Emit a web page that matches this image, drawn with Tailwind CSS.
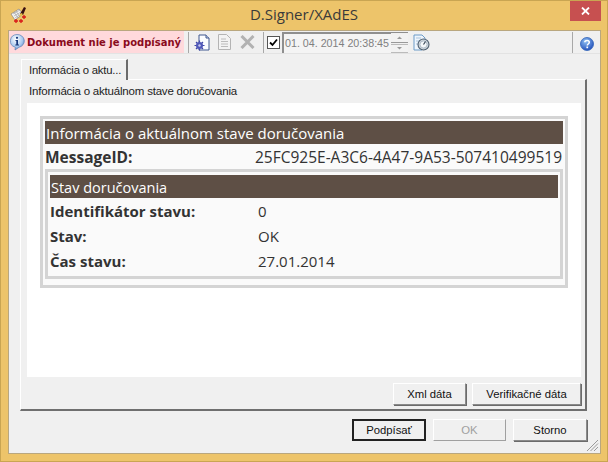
<!DOCTYPE html>
<html><head><meta charset="utf-8">
<script src="https://cdn.jsdelivr.net/npm/@tailwindcss/browser@4"></script>
</head>
<body class="m-0 overflow-hidden">
<div class="relative flex h-[462px] w-[608px] flex-col border border-[#c9a552] bg-[#edc46a] font-['Liberation_Sans',sans-serif] text-[11.300px] text-[#111]">
  <!-- title bar -->
  <div class="relative flex h-[29px] shrink-0 items-start">
    <svg class="ml-[9px] mt-[5px]" width="17" height="18" viewBox="0 0 17 18">
      <path d="M1 8l8-5 4 5-8 6z" fill="#f4f4f4" stroke="#777" stroke-width=".6"/>
      <path d="M3 8l7-4M4 10l7-4M5 12l6-4M4 6l4 6M6 5l4 6" stroke="#999" stroke-width=".6"/>
      <path d="M10 8l4-7 2 1-3 7z" fill="#3a1010"/><path d="M9 10l2-3 2 1-2 2z" fill="#e8c040"/>
      <path d="M4 15h4M6 13v4M9 15h4M11 13v4M12 11h4M14 9v4" stroke="#d81818" stroke-width="1.300"/>
    </svg>
    <div class="absolute left-0 right-0 top-[3px] text-center font-['Open_Sans',sans-serif] text-[15px] leading-[20px] text-[#3a3a3a]">D.Signer/XAdES</div>
    <div class="absolute right-[6px] top-0 flex h-[20px] w-[31px] items-center justify-center bg-[#c75050]">
      <svg width="9" height="8" viewBox="0 0 9 8"><path d="M1 .5l7 7M8 .5l-7 7" stroke="#fff" stroke-width="1.800"/></svg>
    </div>
  </div>
  <!-- client -->
  <div class="ml-[7px] mr-[6px] flex h-[424px] flex-col border border-[#b9a77f] bg-[#f0f0f0]">
    <!-- toolbar -->
    <div class="flex h-[23px] shrink-0 items-center border-b border-[#e3e3e3]">
      <div class="flex h-[22px] w-[175px] shrink-0 items-center bg-[#ffd9dc]">
        <svg class="shrink-0" width="16" height="18" viewBox="0 0 16 18">
          <defs><radialGradient id="i" cx=".4" cy=".3" r=".8"><stop offset="0" stop-color="#ffffff"/><stop offset=".6" stop-color="#a8c8ee"/><stop offset="1" stop-color="#3f6fb5"/></radialGradient></defs>
          <path d="M8 1.500a7 6.500 0 0 1 2 12.800L6 17l.3-2.800A7 6.500 0 0 1 8 1.500z" fill="url(#i)" stroke="#5a7fb5" stroke-width=".7"/>
          <circle cx="8" cy="4.800" r="1.100" fill="#16367a"/><path d="M6.500 7H9v4.500h1v1H6.300v-1h1V8h-.8z" fill="#16367a"/>
        </svg>
        <span class="ml-[2px] font-['DejaVu_Sans',sans-serif] text-[10px] font-bold whitespace-nowrap text-[#8a0b1c]">Dokument nie je podpísaný</span>
      </div>
      <div class="ml-[4px] h-[21px] w-px shrink-0 bg-[#a8a8a8]"></div>
      <svg class="ml-[5px] shrink-0" width="16" height="17" viewBox="0 0 16 17">
        <path d="M5 1h7l3 3v12H5z" fill="#fbfdff" stroke="#40588f"/><path d="M12 1v3h3" fill="#c8d4ea" stroke="#40588f"/>
        <path d="M5.500 6.500v10M.5 11.500h10M2 8l7 7M9 8l-7 7" stroke="#4048a8" stroke-width="1.200"/><circle cx="5.500" cy="11.500" r="3.500" fill="#5058b8"/><circle cx="5.500" cy="11.500" r="1.200" fill="#c8ccf0"/>
      </svg>
      <svg class="ml-[8px] shrink-0" width="13" height="16" viewBox="0 0 13 16">
        <path d="M.5.500h8l4 4v11H.5z" fill="#f3f3f3" stroke="#b4b4b4"/><path d="M3 5h5M3 7.500h7M3 10h7M3 12.500h7" stroke="#bcbcbc"/>
      </svg>
      <svg class="ml-[9px] shrink-0" width="15" height="14" viewBox="0 0 15 14"><path d="M1.500 1l12 12M13.500 1l-12 12" stroke="#b2b2b2" stroke-width="3"/></svg>
      <div class="ml-[8px] h-[21px] w-px shrink-0 bg-[#a8a8a8]"></div>
      <div class="ml-[3px] flex h-[13px] w-[13px] shrink-0 items-center justify-center border border-[#555] bg-white">
        <svg width="9" height="9" viewBox="0 0 9 9"><path d="M1 4.500l2.500 2.500L8 1.500" fill="none" stroke="#000" stroke-width="1.800"/></svg>
      </div>
      <div class="ml-[2px] flex h-[21px] w-[109px] shrink-0 items-center border-t-2 border-l-2 border-[#8f8f8f] bg-[#f4f4f4] pl-[1px]">
        <span class="text-[10.700px] whitespace-nowrap text-[#808080]">01. 04. 2014 20:38:45</span>
      </div>
      <div class="flex h-[21px] w-[17px] shrink-0 flex-col justify-between border-t border-[#8f8f8f] pt-[1px]">
        <div class="flex h-[9px] items-center justify-center border-b border-[#999] bg-[#f2f2f2]"><svg width="5" height="3" viewBox="0 0 5 3"><path d="M0 3l2.500-2.500L5 3z" fill="#999"/></svg></div>
        <div class="flex h-[9px] items-center justify-center border-t border-b border-[#bbb] bg-[#f2f2f2]"><svg width="5" height="3" viewBox="0 0 5 3"><path d="M0 0l2.500 2.500L5 0z" fill="#999"/></svg></div>
      </div>
      <svg class="ml-[5px] shrink-0" width="17" height="17" viewBox="0 0 17 17">
        <path d="M1 1h8l3 3v3a5 5 0 0 0-3 9H1z" fill="#eef5fc" stroke="#6d9cc8"/><path d="M3 4h5M3 7h5M3 10h4" stroke="#a9c3dc"/>
        <circle cx="10.500" cy="10.500" r="5.500" fill="#cfd6dc" stroke="#4e5f70" stroke-width="1.100"/><circle cx="10.500" cy="10.500" r="3.500" fill="#f5f8fa" stroke="#8da0b0" stroke-width=".6"/><path d="M10.500 10.500l2-3" stroke="#2a3a4a" stroke-width="1.100"/>
      </svg>
      <div class="ml-auto mr-[27px] h-[21px] w-px shrink-0 bg-[#a8a8a8]"></div>
      <svg class="absolute right-[13px] top-[36px]" width="14" height="14" viewBox="0 0 14 14">
        <defs><radialGradient id="h" cx=".4" cy=".3" r=".8"><stop offset="0" stop-color="#8fc0f4"/><stop offset="1" stop-color="#1844b4"/></radialGradient></defs>
        <circle cx="7" cy="7" r="6.500" fill="url(#h)" stroke="#2f62b8" stroke-width=".8"/>
        <path d="M4.800 5.300C4.800 3.900 6 3.400 7.100 3.400c1.300 0 2.200.8 2.200 1.900 0 1.700-2 1.700-2 3.200" fill="none" stroke="#fff" stroke-width="1.500"/><rect x="6.400" y="9.500" width="1.700" height="1.700" fill="#fff"/>
      </svg>
    </div>
    <!-- tabs -->
    <div class="relative flex flex-1 flex-col pl-[12px] pr-[13px] pt-[5px]">
      <div class="relative z-10 flex h-[21px] w-[107px] items-center border-t border-l border-white border-r-2 border-r-[#6b6b6b] bg-[#f0f0f0] pl-[7px] text-[11.300px] tracking-[-.2px] whitespace-nowrap text-[#222]">Informácia o aktu...</div>
      <div class="-ml-[1px] -mt-[1px] flex h-[332px] flex-col border-t border-l border-white border-r-2 border-b-2 border-r-[#6f6f6f] border-b-[#6f6f6f] bg-[#f0f0f0] pl-[6px] pr-[4px]">
        <div class="flex h-[23px] shrink-0 items-center pl-[2px] text-[11.500px] tracking-[-.2px] text-[#222]">Informácia o aktuálnom stave doručovania</div>
        <div class="flex h-[274px] flex-col bg-white px-[13px] pt-[13px] font-['Open_Sans',sans-serif]">
          <div class="flex h-[172px] flex-col border-3 border-[#d4d4d4] bg-[#fafafa] px-[2px] pt-[2px]">
            <div class="h-[23px] shrink-0 bg-[#5e4f45] pl-[1px] text-[15px] leading-[25px] text-white">Informácia o aktuálnom stave doručovania</div>
            <div class="flex h-[25px] shrink-0 items-center justify-between pt-[3px] text-[15.500px] text-[#333]">
              <span class="font-bold">MessageID:</span><span class="pr-[1px]">25FC925E-A3C6-4A47-9A53-507410499519</span>
            </div>
            <div class="flex h-[110px] flex-col border-3 border-[#d4d4d4] px-[2px] pt-[3px]">
              <div class="h-[23px] shrink-0 bg-[#5e4f45] pl-[1px] text-[14.500px] leading-[25px] text-white">Stav doručovania</div>
              <div class="grid grid-cols-[208px_1fr] pt-[1px] text-[15px] leading-[25px] text-[#333]">
                <span class="font-bold">Identifikátor stavu:</span><span>0</span>
                <span class="font-bold">Stav:</span><span>OK</span>
                <span class="font-bold">Čas stavu:</span><span>27.01.2014</span>
              </div>
            </div>
          </div>
        </div>
        <div class="flex flex-1 items-start justify-end gap-[6px] pt-[6px]">
          <div class="flex h-[22px] w-[73px] items-center justify-center border border-t-white border-l-white border-r-[#8a8a8a] border-b-[#8a8a8a] bg-[#f0f0f0] shadow-[1px_1px_0_#6b6b6b]">Xml dáta</div>
          <div class="flex h-[22px] w-[109px] items-center justify-center border border-t-white border-l-white border-r-[#8a8a8a] border-b-[#8a8a8a] bg-[#f0f0f0] shadow-[1px_1px_0_#6b6b6b]">Verifikačné dáta</div>
        </div>
      </div>
      <!-- dialog buttons -->
      <div class="mt-[8px] flex items-start justify-end gap-[7px]">
        <div class="flex h-[22px] w-[74px] items-center justify-center border-2 border-[#222] bg-[#f0f0f0]">Podpísať</div>
        <div class="flex h-[22px] w-[73px] items-center justify-center border border-t-white border-l-white border-r-[#a0a0a0] border-b-[#a0a0a0] bg-[#f0f0f0] text-[#a0a0a0]">OK</div>
        <div class="flex h-[22px] w-[74px] items-center justify-center border border-t-white border-l-white border-r-[#8a8a8a] border-b-[#8a8a8a] bg-[#f0f0f0] shadow-[1px_1px_0_#6b6b6b]">Storno</div>
      </div>
      <svg class="absolute right-[1px] bottom-[1px]" width="13" height="13" viewBox="0 0 13 13"><path d="M12 1L1 12M12 4.500L4.500 12M12 8l-4 4" stroke="#9a9a9a"/></svg>
    </div>
  </div>
</div>
</body></html>
